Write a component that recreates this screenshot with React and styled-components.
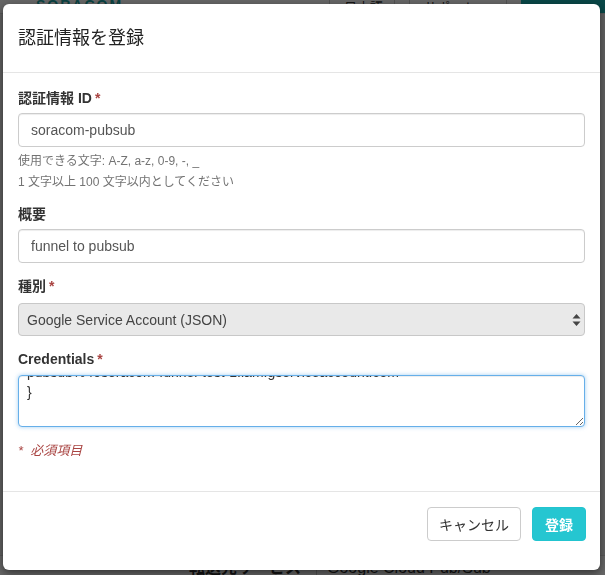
import { useEffect, useRef } from "react";
import styled, { createGlobalStyle } from "styled-components";

const GlobalStyle = createGlobalStyle`
  html, body {
    margin: 0;
    padding: 0;
    background: #f2f2f2;
    font-family: "Liberation Sans", "Noto Sans CJK JP", sans-serif;
    color: #333;
  }
  * { box-sizing: border-box; }
`;

const credentials = `{
  "type": "service_account",
  "project_id": "soracom-funnel-test",
  "private_key_id": "3f1e8a0c5b2d4e6f",
  "client_email": "soracom-pubsub@soracom-funnel-test.iam.gserviceaccount.com",
  "client_id": "104857200000000000000",
  "auth_uri": "https://accounts.google.com/o/oauth2/auth",
  "token_uri": "https://accounts.google.com/o/oauth2/token",
  "client_x509_cert_url": "https://www.googleapis.com/robot/v1/metadata/x509/soracom-pubsub%40soracom-funnel-test-1.iam.gserviceaccount.com"
}
`;

const Page = styled.div`
  height: 575px;
  overflow: hidden;
  display: flex;
  flex-direction: column;
  justify-content: space-between;
`;

const TopBar = styled.div`
  height: 14px;
  display: flex;
  align-items: flex-end;
  background: #fff;
  border-bottom: 1px solid #ddd;
`;

const Logo = styled.div`
  width: 329px;
  padding-left: 36px;
  font-size: 14px;
  font-weight: bold;
  color: #1aa5a5;
  letter-spacing: 2px;
  line-height: 12px;
  height: 14px;
  overflow: hidden;
`;

const NavItem = styled.div`
  width: ${(p) => p.$w}px;
  height: 14px;
  border-left: 1px solid #ccc;
  font-size: 13px;
  line-height: 18px;
  padding-left: 14px;
  overflow: hidden;
  white-space: nowrap;
`;

const TealBlock = styled.div`
  flex: 1;
  height: 14px;
  background: #17b1b1;
`;

const BottomRow = styled.div`
  display: flex;
  align-items: flex-end;
  height: 20px;
  background: #fff;
  border-top: 1px solid #ddd;
`;

const Cell = styled.div`
  width: ${(p) => p.$w}px;
  padding-left: ${(p) => p.$pl}px;
  font-size: 16px;
  font-weight: ${(p) => (p.$bold ? "bold" : "normal")};
  line-height: 14px;
  height: 14px;
  white-space: nowrap;
  border-right: ${(p) => (p.$line ? "1px solid #ccc" : "none")};
`;

const Backdrop = styled.div`
  position: fixed;
  inset: 0;
  background: rgba(0, 0, 0, 0.6);
  padding: 4px 5px 0 3px;
`;

const Modal = styled.div`
  background: #fff;
  border-radius: 6px;
  box-shadow: 0 3px 9px rgba(0, 0, 0, 0.5);
  height: 566px;
  display: flex;
  flex-direction: column;
`;

const Header = styled.div`
  padding: 22px 15px;
  border-bottom: 1px solid #e5e5e5;
`;

const Title = styled.h4`
  margin: 0;
  font-size: 18px;
  font-weight: normal;
  line-height: 24px;
  color: #222;
`;

const Body = styled.div`
  flex: 1;
  padding: 15px 15px 0;
  border-bottom: 1px solid #e5e5e5;
`;

const Group = styled.div`
  margin-bottom: ${(p) => p.$mb ?? 13}px;
`;

const Label = styled.label`
  display: block;
  font-size: 14px;
  font-weight: bold;
  line-height: 20px;
  margin-bottom: ${(p) => p.$mb ?? 5}px;
  color: #333;
`;

const Star = styled.span`
  color: #a94442;
  margin-left: 3px;
`;

const Input = styled.input`
  display: block;
  width: 100%;
  height: 34px;
  padding: 6px 12px;
  font-family: inherit;
  font-size: 14px;
  color: #555;
  background: #fff;
  border: 1px solid #ccc;
  border-radius: 4px;
  box-shadow: inset 0 1px 1px rgba(0, 0, 0, 0.075);
  outline: none;
`;

const Help = styled.div`
  font-size: 12px;
  line-height: 17px;
  color: #737373;
  margin-top: ${(p) => p.$mt}px;
`;

const SelectWrap = styled.div`
  position: relative;
`;

const Select = styled.select`
  display: block;
  width: 100%;
  height: 33px;
  padding: 6px 12px 6px 8px;
  font-family: inherit;
  font-size: 14px;
  color: #444;
  background: #e9e9e9;
  border: 1px solid #c8c8c8;
  border-radius: 4px;
  appearance: none;
  outline: none;
`;

const Arrows = styled.svg`
  position: absolute;
  right: 4px;
  top: 11px;
  pointer-events: none;
`;

const TextArea = styled.textarea`
  display: block;
  width: 100%;
  height: 52px;
  padding: 6px 12px 4px 8px;
  font-family: inherit;
  font-size: 14px;
  line-height: 20px;
  color: #333;
  border: 1px solid #66afe9;
  border-radius: 4px;
  box-shadow: inset 0 1px 1px rgba(0, 0, 0, 0.075), 0 0 4px rgba(102, 175, 233, 0.6);
  outline: none;
  resize: vertical;
`;

const Required = styled.p`
  margin: 15px 0 0;
  font-size: 13px;
  line-height: 17px;
  font-style: italic;
  color: #a94442;
`;

const Footer = styled.div`
  display: flex;
  justify-content: flex-end;
  gap: 11px;
  padding: 15px 14px 29px;
`;

const Button = styled.button`
  height: 34px;
  padding: ${(p) => (p.$primary ? "6px 12px" : "6px 11px")};
  font-family: inherit;
  font-size: 14px;
  border-radius: 4px;
  border: 1px solid ${(p) => (p.$primary ? "#22c4cf" : "#ccc")};
  background: ${(p) => (p.$primary ? "#25c6d1" : "#fff")};
  color: ${(p) => (p.$primary ? "#fff" : "#333")};
  font-weight: ${(p) => (p.$primary ? "bold" : "normal")};
`;

export default function App() {
  const areaRef = useRef(null);

  useEffect(() => {
    const el = areaRef.current;
    if (el) el.scrollTop = el.scrollHeight;
  }, []);

  return (
    <>
      <GlobalStyle />
      <Page>
        <TopBar>
          <Logo>SORACOM</Logo>
          <NavItem $w={65}>日本語</NavItem>
          <NavItem $w={13} />
          <NavItem $w={97}>サポート</NavItem>
          <NavItem $w={11} />
          <TealBlock />
        </TopBar>
        <BottomRow>
          <Cell $w={317} $pl={189} $bold $line>
            転送先サービス
          </Cell>
          <Cell $w={200} $pl={10}>
            Google Cloud Pub/Sub
          </Cell>
        </BottomRow>
      </Page>
      <Backdrop>
        <Modal>
          <Header>
            <Title>認証情報を登録</Title>
          </Header>
          <Body>
            <Group>
              <Label>
                認証情報 ID<Star>*</Star>
              </Label>
              <Input defaultValue="soracom-pubsub" />
              <Help $mt={6}>使用できる文字: A-Z, a-z, 0-9, -, _</Help>
              <Help $mt={4}>1 文字以上 100 文字以内としてください</Help>
            </Group>
            <Group>
              <Label>概要</Label>
              <Input defaultValue="funnel to pubsub" />
            </Group>
            <Group>
              <Label $mb={7}>
                種別<Star>*</Star>
              </Label>
              <SelectWrap>
                <Select defaultValue="gsa">
                  <option value="gsa">Google Service Account (JSON)</option>
                </Select>
                <Arrows width="9" height="12" viewBox="0 0 9 12">
                  <path d="M4.5 0 L8.5 4.5 L0.5 4.5 Z M4.5 12 L8.5 7.5 L0.5 7.5 Z" fill="#444" />
                </Arrows>
              </SelectWrap>
            </Group>
            <Group $mb={0}>
              <Label $mb={6}>
                Credentials<Star>*</Star>
              </Label>
              <TextArea ref={areaRef} defaultValue={credentials} />
            </Group>
            <Required>*&nbsp;&nbsp;必須項目</Required>
          </Body>
          <Footer>
            <Button>キャンセル</Button>
            <Button $primary>登録</Button>
          </Footer>
        </Modal>
      </Backdrop>
    </>
  );
}
